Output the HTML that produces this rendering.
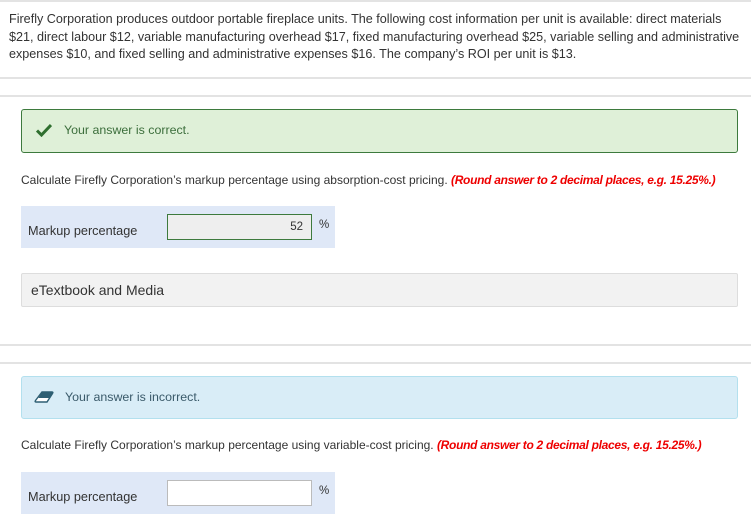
<!DOCTYPE html>
<html><head><style>
*{margin:0;padding:0;box-sizing:border-box}
body{width:751px;height:526px;background:#fff;font-family:"Liberation Sans",sans-serif;color:#333;font-size:12px;position:relative;overflow:hidden}
.abs{position:absolute}
.hr{position:absolute;left:0;width:751px;height:2px;background:#e3e3e3}
.intro{left:9px;top:11px;line-height:17.5px;white-space:nowrap;font-size:12.6px}
.alert{position:absolute;left:21px;width:717px;border-radius:3px}
.q{position:absolute;left:21px;white-space:nowrap;font-size:12px}
.q b{color:#e00;font-style:italic;font-weight:bold;letter-spacing:-0.3px}
.lab{position:absolute;left:21px;width:314px;height:42px;background:#dfe8f7}
.lab span{position:absolute;left:7px;top:18px;font-size:12.7px}
.inp{position:absolute;left:146px;top:8px;width:145px;height:26px;border:1px solid #bbb;background:#fff;text-align:right;padding:6px 8px;font-size:11.5px}
.pct{position:absolute;left:298px;top:13px;font-size:11.5px}
</style></head><body>
<div class="hr" style="top:0"></div>
<div class="abs intro">Firefly Corporation produces outdoor portable fireplace units. The following cost information per unit is available: direct materials<br>$21, direct labour $12, variable manufacturing overhead $17, fixed manufacturing overhead $25, variable selling and administrative<br>expenses $10, and fixed selling and administrative expenses $16. The company’s ROI per unit is $13.</div>
<div class="hr" style="top:77px"></div>
<div class="hr" style="top:95px"></div>

<div class="alert" style="top:109px;height:44px;background:#dff0d8;border:1px solid #3d7a3d;">
<svg class="abs" style="left:14px;top:13px" width="16" height="14" viewBox="0 0 16 14"><path d="M1 7.5 L5.5 12 L15 2" fill="none" stroke="#2f6f2f" stroke-width="3"/></svg>
<span class="abs" style="left:42px;top:13px;color:#3c6e3c;font-size:12.4px">Your answer is correct.</span></div>

<div class="q" style="top:173px">Calculate Firefly Corporation’s markup percentage using absorption-cost pricing. <b>(Round answer to 2 decimal places, e.g. 15.25%.)</b></div>
<div class="lab" style="top:206px"><span>Markup percentage</span>
<div class="inp" style="background:#eee;border-color:#3d7a3d">52</div><div class="pct">%</div></div>

<div class="abs" style="left:21px;top:273px;width:717px;height:34px;background:#f2f2f2;border:1px solid #ddd;border-radius:2px;"><span class="abs" style="left:9px;top:8px;font-size:14px">eTextbook and Media</span></div>

<div class="hr" style="top:344px"></div>
<div class="hr" style="top:362px"></div>

<div class="alert" style="top:376px;height:43px;background:#d9edf7;border:1px solid #b3e0ee;">
<svg class="abs" style="left:12px;top:14px" width="20" height="12" viewBox="0 0 20 12"><path d="M8 1 H18 Q19.5 1 18.5 2.5 L13 11 H2 Q0.5 11 1.5 9.5 Z" fill="#fff" stroke="#2e5f73" stroke-width="1.4"/><path d="M8 1 H18 Q19.5 1 18.5 2.5 L15.5 7 H4.5 Z" fill="#2e5f73"/></svg>
<span class="abs" style="left:43px;top:13px;color:#3a5a6a;font-size:12.4px">Your answer is incorrect.</span></div>

<div class="q" style="top:438px">Calculate Firefly Corporation’s markup percentage using variable-cost pricing. <b>(Round answer to 2 decimal places, e.g. 15.25%.)</b></div>
<div class="lab" style="top:472px"><span>Markup percentage</span>
<div class="inp"></div><div class="pct">%</div></div>
</body></html>
